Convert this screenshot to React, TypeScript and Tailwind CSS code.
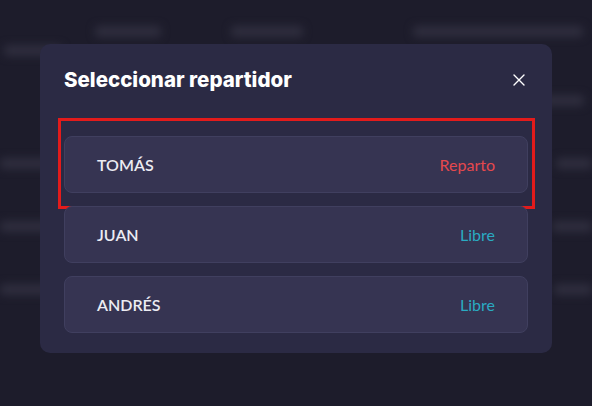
import React from "react";

const riders = [
  { name: "TOMÁS", status: "Reparto", busy: true },
  { name: "JUAN", status: "Libre", busy: false },
  { name: "ANDRÉS", status: "Libre", busy: false },
];

function Backdrop() {
  // blurred page behind the overlay
  const bar = "h-[11px] rounded bg-[#2f2e3e]";
  return (
    <div className="blur-[4px] pt-[26px]">
      <div className="flex gap-[70px] pl-[95px]">
        <div className={`${bar} w-[66px]`} />
        <div className={`${bar} w-[72px]`} />
        <div className={`${bar} w-[170px] ml-[40px]`} />
      </div>
      <div className="flex flex-col gap-[52px] mt-[8px]">
        <div className="flex justify-between pr-2">
          <div className={`${bar} w-[58px] ml-[4px]`} />
          <div className={`${bar} w-[40px] mt-[50px]`} />
        </div>
        <div className="flex justify-between">
          <div className={`${bar} w-[60px]`} />
          <div className={`${bar} w-[36px]`} />
        </div>
        <div className="flex justify-between">
          <div className={`${bar} w-[50px]`} />
          <div className={`${bar} w-[40px]`} />
        </div>
        <div className="flex justify-between">
          <div className={`${bar} w-[56px]`} />
          <div className={`${bar} w-[38px]`} />
        </div>
      </div>
    </div>
  );
}

export default function App() {
  return (
    <div className="relative w-[592px] h-[406px] overflow-hidden bg-[#1d1c2b]">
      <Backdrop />
      <div className="absolute left-[40px] top-[44px] w-[512px] rounded-[10px] bg-[#2b2a44] px-6 pt-[22px] pb-[20px]">
        <div className="flex items-center justify-between">
          <h2
            className="text-[20.5px] leading-[28px] font-extrabold text-white"
            style={{ fontFamily: '"Inter", "Noto Sans", sans-serif' }}
          >
            Seleccionar repartidor
          </h2>
          <button className="mr-[3px] text-white">
            <svg width="12" height="12" viewBox="0 0 12 12" fill="none">
              <path d="M1 1L11 11M11 1L1 11" stroke="currentColor" strokeWidth="1.4" strokeLinecap="round" />
            </svg>
          </button>
        </div>
        <div
          className="mt-[42px] flex flex-col gap-[13px]"
          style={{ fontFamily: '"Lato", "Noto Sans", sans-serif' }}
        >
          {riders.map((r) => (
            <div key={r.name} className="relative">
              <div className="h-[57px] flex items-center justify-between rounded-lg border border-[#403f5f] bg-[#363452] px-8">
                <span className="text-[16px] font-semibold text-[#ececf2]">{r.name}</span>
                <span className={`text-[16px] ${r.busy ? "text-[#e5484d]" : "text-[#2aabc2]"}`}>
                  {r.status}
                </span>
              </div>
              {r.busy && (
                <div className="absolute -left-[6px] -right-[7px] -top-[18px] -bottom-[16px] border-[3px] border-[#e31b1b]" />
              )}
            </div>
          ))}
        </div>
      </div>
    </div>
  );
}
